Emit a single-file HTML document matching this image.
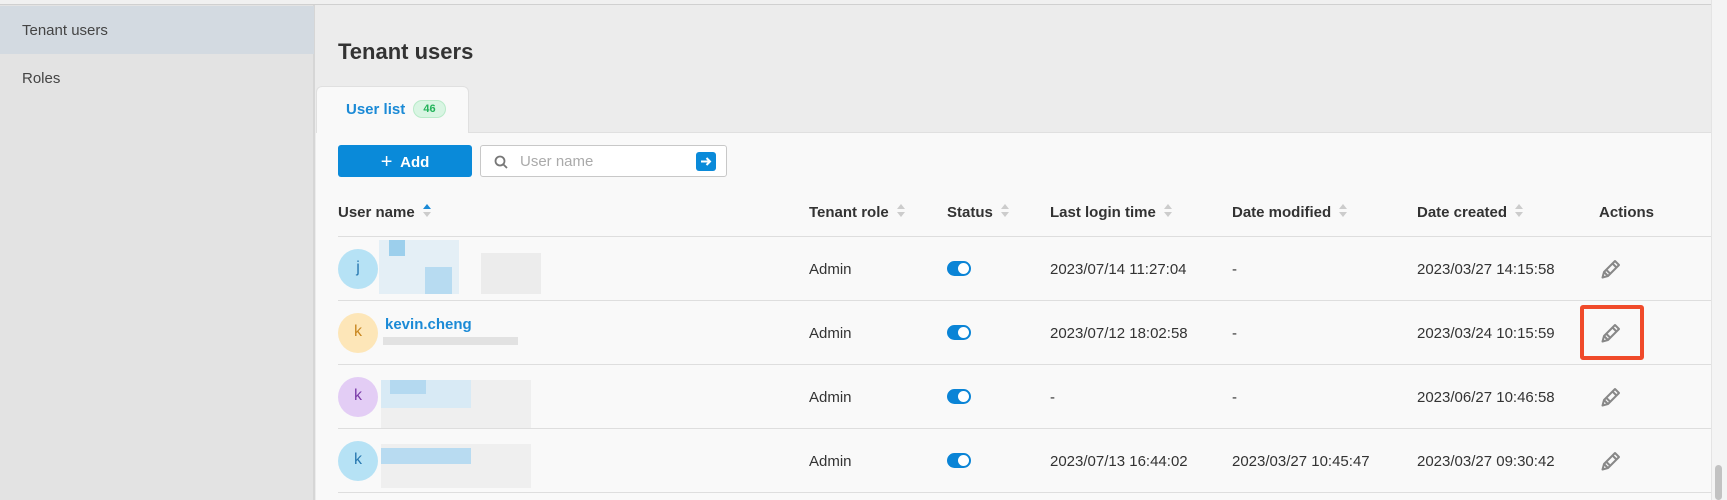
<!DOCTYPE html>
<html><head><meta charset="utf-8"><style>
*{box-sizing:border-box;margin:0;padding:0}
body{width:1727px;height:500px;overflow:hidden;background:#ececec;font-family:"Liberation Sans",Arial,sans-serif;color:#333;position:relative}
.abs{position:absolute}
.side{left:0;top:0;width:315px;height:500px;background:#e3e3e3;border-right:2px solid #d6d6d6}
.topline{left:0;top:0;width:1727px;height:5px;background:#f0f0f0;border-bottom:1px solid #d0d0d0}
.navact{left:0;top:6px;width:314px;height:48px;background:#d3dae1}
.nav{left:22px;font-size:15px;color:#444}
.title{left:338px;top:39px;font-size:22px;font-weight:bold;color:#333}
.tab{left:316px;top:86px;width:153px;height:47px;background:#f9f9f9;border-radius:6px 6px 0 0;border:1px solid #e0e0e0;border-bottom:none}
.card{left:316px;top:132px;width:1395px;height:368px;background:#f9f9f9;border-top:1px solid #e0e0e0}
.tabtxt{left:346px;top:101px;font-size:15px;font-weight:bold;color:#1b8ad6}
.badge{left:413px;top:100px;width:33px;height:18px;border-radius:9px;background:#d9f5e3;border:1px solid #b8ebc9;color:#22b35a;font-size:11px;font-weight:bold;text-align:center;line-height:16px}
.add{left:338px;top:145px;width:134px;height:32px;background:#0a8ad9;border-radius:3px;color:#fff;font-weight:bold;font-size:15px;text-align:center;line-height:32px}
.search{left:480px;top:145px;width:247px;height:32px;background:#fff;border:1px solid #c8c8c8;border-radius:3px}
.th{top:204px;font-size:15px;font-weight:bold;color:#333}
.td{font-size:15px;color:#333}
.line{left:338px;width:1373px;height:1px;background:#dedede}
.sort{display:inline-block;vertical-align:middle;margin-left:8px;width:8px;height:14px;position:relative;top:-2px}
.sort:before{content:"";position:absolute;left:0;top:0;border-left:4px solid transparent;border-right:4px solid transparent;border-bottom:5px solid #ccc}
.sort:after{content:"";position:absolute;left:0;top:8px;border-left:4px solid transparent;border-right:4px solid transparent;border-top:5px solid #ccc}
.sort.up:before{border-bottom-color:#1b8ad6}
.av{left:338px;width:40px;height:40px;border-radius:50%;text-align:center;line-height:38px;font-size:16px}
.tog{left:947px;width:24px;height:15px;border-radius:8px;background:#0a84d6}
.tog:after{content:"";position:absolute;right:2px;top:2px;width:11px;height:11px;border-radius:50%;background:#fff}
.blk{position:absolute}
</style></head><body>
<div class="abs side"></div>
<div class="abs topline"></div>
<div class="abs navact"></div>
<div class="abs nav" style="top:22px">Tenant users</div>
<div class="abs nav" style="top:70px">Roles</div>
<div class="abs title">Tenant users</div>
<div class="abs card"></div>
<div class="abs tab"></div>
<div class="abs tabtxt">User list</div>
<div class="abs badge">46</div>
<div class="abs add"><span style="font-size:20px;font-weight:normal;position:relative;top:1px">+</span>&nbsp; Add</div>
<div class="abs search">
<svg class="abs" style="left:13px;top:9px" width="14" height="14" viewBox="0 0 14 14"><circle cx="6" cy="6" r="4.5" fill="none" stroke="#777" stroke-width="1.8"/><line x1="9.2" y1="9.2" x2="13" y2="13" stroke="#777" stroke-width="1.8"/></svg>
<div class="abs" style="left:39px;top:7px;font-size:15px;color:#aaa">User name</div>
<div class="abs" style="left:215px;top:6px;width:20px;height:19px;background:#0a8ad9;border-radius:3px"><svg width="20" height="19" viewBox="0 0 20 19"><path d="M5 9.5h9M10.5 6l3.5 3.5-3.5 3.5" fill="none" stroke="#fff" stroke-width="2"/></svg></div>
</div>
<div class="abs th" style="left:338px">User name<span class="sort up"></span></div>
<div class="abs th" style="left:809px">Tenant role<span class="sort"></span></div>
<div class="abs th" style="left:947px">Status<span class="sort"></span></div>
<div class="abs th" style="left:1050px">Last login time<span class="sort"></span></div>
<div class="abs th" style="left:1232px">Date modified<span class="sort"></span></div>
<div class="abs th" style="left:1417px">Date created<span class="sort"></span></div>
<div class="abs th" style="left:1599px">Actions</div>
<div class="abs line" style="top:236px"></div>
<div class="abs line" style="top:300px"></div>
<div class="abs line" style="top:364px"></div>
<div class="abs line" style="top:428px"></div>
<div class="abs line" style="top:492px"></div>
<!-- row1 -->
<div class="abs av" style="top:249px;background:#b6e2f5;color:#2878b0">j</div>
<div class="abs" style="left:379px;top:240px;width:170px;height:55px">
<div class="blk" style="left:0;top:0;width:80px;height:54px;background:#e4eff6"></div>
<div class="blk" style="left:10px;top:0;width:16px;height:16px;background:#9ccfec"></div>
<div class="blk" style="left:46px;top:27px;width:27px;height:27px;background:#b7dbf1"></div>
<div class="blk" style="left:102px;top:13px;width:60px;height:41px;background:#ececec"></div>
</div>
<div class="abs td" style="left:809px;top:261px">Admin</div>
<div class="abs tog" style="top:261px"></div>
<div class="abs td" style="left:1050px;top:261px">2023/07/14 11:27:04</div>
<div class="abs td" style="left:1232px;top:261px">-</div>
<div class="abs td" style="left:1417px;top:261px">2023/03/27 14:15:58</div>
<!-- row2 -->
<div class="abs av" style="top:313px;background:#fde6b8;color:#c8861f">k</div>
<div class="abs" style="left:385px;top:316px;font-size:15px;font-weight:bold;color:#1b8ad6">kevin.cheng</div>
<div class="abs" style="left:383px;top:337px;width:135px;height:8px;background:#e2e2e2"></div>
<div class="abs td" style="left:809px;top:325px">Admin</div>
<div class="abs tog" style="top:325px"></div>
<div class="abs td" style="left:1050px;top:325px">2023/07/12 18:02:58</div>
<div class="abs td" style="left:1232px;top:325px">-</div>
<div class="abs td" style="left:1417px;top:325px">2023/03/24 10:15:59</div>
<div class="abs" style="left:1580px;top:305px;width:64px;height:55px;border:4px solid #f04a2a;border-radius:3px"></div>
<!-- row3 -->
<div class="abs av" style="top:377px;background:#e3cdf5;color:#7a3aa8">k</div>
<div class="abs" style="left:381px;top:380px;width:150px;height:48px;background:#efefef"></div>
<div class="abs" style="left:381px;top:380px;width:90px;height:28px;background:#d8eaf5"></div>
<div class="abs" style="left:390px;top:380px;width:36px;height:14px;background:#b4d9f0"></div>
<div class="abs td" style="left:809px;top:389px">Admin</div>
<div class="abs tog" style="top:389px"></div>
<div class="abs td" style="left:1050px;top:389px">-</div>
<div class="abs td" style="left:1232px;top:389px">-</div>
<div class="abs td" style="left:1417px;top:389px">2023/06/27 10:46:58</div>
<!-- row4 -->
<div class="abs av" style="top:441px;background:#b6e2f5;color:#2878b0">k</div>
<div class="abs" style="left:381px;top:444px;width:150px;height:44px;background:#efefef"></div>
<div class="abs" style="left:381px;top:448px;width:90px;height:16px;background:#b8dbf1"></div>
<div class="abs td" style="left:809px;top:453px">Admin</div>
<div class="abs tog" style="top:453px"></div>
<div class="abs td" style="left:1050px;top:453px">2023/07/13 16:44:02</div>
<div class="abs td" style="left:1232px;top:453px">2023/03/27 10:45:47</div>
<div class="abs td" style="left:1417px;top:453px">2023/03/27 09:30:42</div>
<!-- pencils -->
<svg class="abs" style="left:1600px;top:258px" width="22" height="22" viewBox="0 0 22 22"><g fill="none" stroke="#888" stroke-width="2" stroke-linejoin="round"><path d="M2.5 19.5l1.5-5.5L15 3l4 4L8 18z"/><path d="M12.5 5.5l4 4M6.5 12l4 4M4 14l4 4"/></g></svg>
<svg class="abs" style="left:1600px;top:322px" width="22" height="22" viewBox="0 0 22 22"><g fill="none" stroke="#888" stroke-width="2" stroke-linejoin="round"><path d="M2.5 19.5l1.5-5.5L15 3l4 4L8 18z"/><path d="M12.5 5.5l4 4M6.5 12l4 4M4 14l4 4"/></g></svg>
<svg class="abs" style="left:1600px;top:386px" width="22" height="22" viewBox="0 0 22 22"><g fill="none" stroke="#888" stroke-width="2" stroke-linejoin="round"><path d="M2.5 19.5l1.5-5.5L15 3l4 4L8 18z"/><path d="M12.5 5.5l4 4M6.5 12l4 4M4 14l4 4"/></g></svg>
<svg class="abs" style="left:1600px;top:450px" width="22" height="22" viewBox="0 0 22 22"><g fill="none" stroke="#888" stroke-width="2" stroke-linejoin="round"><path d="M2.5 19.5l1.5-5.5L15 3l4 4L8 18z"/><path d="M12.5 5.5l4 4M6.5 12l4 4M4 14l4 4"/></g></svg>
<div class="abs" style="left:1711px;top:0;width:16px;height:500px;background:#f4f4f4;border-left:1px solid #e4e4e4"></div>
<div class="abs" style="left:1715px;top:465px;width:7px;height:35px;background:#c2c2c2;border-radius:4px"></div>
</body></html>
